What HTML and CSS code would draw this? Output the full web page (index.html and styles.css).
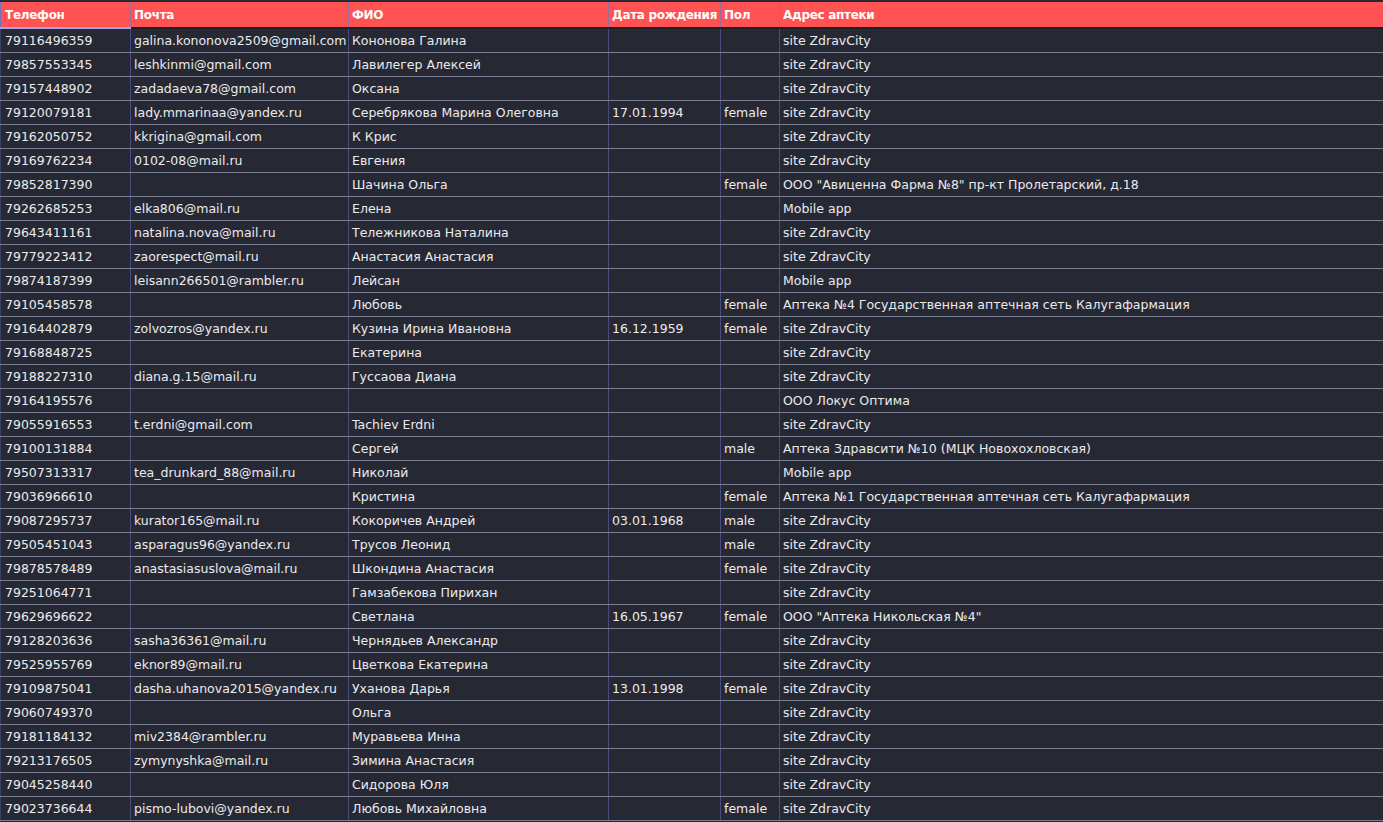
FILE: index.html
```html
<!DOCTYPE html>
<html lang="ru">
<head>
<meta charset="utf-8">
<title>Клиенты</title>
<link rel="stylesheet" href="styles.css">
</head>
<body>
<table class="grid">
<colgroup>
<col class="c-phone"><col class="c-mail"><col class="c-name"><col class="c-date"><col class="c-sex"><col class="c-addr">
</colgroup>
<thead>
<tr><th class="first">Телефон</th><th>Почта</th><th>ФИО</th><th>Дата рождения</th><th>Пол</th><th>Адрес аптеки</th></tr>
</thead>
<tbody>
<tr><td>79116496359</td><td>galina.kononova2509@gmail.com</td><td>Кононова Галина</td><td></td><td></td><td>site ZdravCity</td></tr>
<tr><td>79857553345</td><td>leshkinmi@gmail.com</td><td>Лавилегер Алексей</td><td></td><td></td><td>site ZdravCity</td></tr>
<tr><td>79157448902</td><td>zadadaeva78@gmail.com</td><td>Оксана</td><td></td><td></td><td>site ZdravCity</td></tr>
<tr><td>79120079181</td><td>lady.mmarinaa@yandex.ru</td><td>Серебрякова Марина Олеговна</td><td>17.01.1994</td><td>female</td><td>site ZdravCity</td></tr>
<tr><td>79162050752</td><td>kkrigina@gmail.com</td><td>К Крис</td><td></td><td></td><td>site ZdravCity</td></tr>
<tr><td>79169762234</td><td>0102-08@mail.ru</td><td>Евгения</td><td></td><td></td><td>site ZdravCity</td></tr>
<tr><td>79852817390</td><td></td><td>Шачина Ольга</td><td></td><td>female</td><td>ООО "Авиценна Фарма №8" пр-кт Пролетарский, д.18</td></tr>
<tr><td>79262685253</td><td>elka806@mail.ru</td><td>Елена</td><td></td><td></td><td>Mobile app</td></tr>
<tr><td>79643411161</td><td>natalina.nova@mail.ru</td><td>Тележникова Наталина</td><td></td><td></td><td>site ZdravCity</td></tr>
<tr><td>79779223412</td><td>zaorespect@mail.ru</td><td>Анастасия Анастасия</td><td></td><td></td><td>site ZdravCity</td></tr>
<tr><td>79874187399</td><td>leisann266501@rambler.ru</td><td>Лейсан</td><td></td><td></td><td>Mobile app</td></tr>
<tr><td>79105458578</td><td></td><td>Любовь</td><td></td><td>female</td><td>Аптека №4 Государственная аптечная сеть Калугафармация</td></tr>
<tr><td>79164402879</td><td>zolvozros@yandex.ru</td><td>Кузина Ирина Ивановна</td><td>16.12.1959</td><td>female</td><td>site ZdravCity</td></tr>
<tr><td>79168848725</td><td></td><td>Екатерина</td><td></td><td></td><td>site ZdravCity</td></tr>
<tr><td>79188227310</td><td>diana.g.15@mail.ru</td><td>Гуссаова Диана</td><td></td><td></td><td>site ZdravCity</td></tr>
<tr><td>79164195576</td><td></td><td></td><td></td><td></td><td>ООО Локус Оптима</td></tr>
<tr><td>79055916553</td><td>t.erdni@gmail.com</td><td>Tachiev Erdni</td><td></td><td></td><td>site ZdravCity</td></tr>
<tr><td>79100131884</td><td></td><td>Сергей</td><td></td><td>male</td><td>Аптека Здравсити №10 (МЦК Новохохловская)</td></tr>
<tr><td>79507313317</td><td>tea_drunkard_88@mail.ru</td><td>Николай</td><td></td><td></td><td>Mobile app</td></tr>
<tr><td>79036966610</td><td></td><td>Кристина</td><td></td><td>female</td><td>Аптека №1 Государственная аптечная сеть Калугафармация</td></tr>
<tr><td>79087295737</td><td>kurator165@mail.ru</td><td>Кокоричев Андрей</td><td>03.01.1968</td><td>male</td><td>site ZdravCity</td></tr>
<tr><td>79505451043</td><td>asparagus96@yandex.ru</td><td>Трусов Леонид</td><td></td><td>male</td><td>site ZdravCity</td></tr>
<tr><td>79878578489</td><td>anastasiasuslova@mail.ru</td><td>Шкондина Анастасия</td><td></td><td>female</td><td>site ZdravCity</td></tr>
<tr><td>79251064771</td><td></td><td>Гамзабекова Пирихан</td><td></td><td></td><td>site ZdravCity</td></tr>
<tr><td>79629696622</td><td></td><td>Светлана</td><td>16.05.1967</td><td>female</td><td>ООО "Аптека Никольская №4"</td></tr>
<tr><td>79128203636</td><td>sasha36361@mail.ru</td><td>Чернядьев Александр</td><td></td><td></td><td>site ZdravCity</td></tr>
<tr><td>79525955769</td><td>eknor89@mail.ru</td><td>Цветкова Екатерина</td><td></td><td></td><td>site ZdravCity</td></tr>
<tr><td>79109875041</td><td>dasha.uhanova2015@yandex.ru</td><td>Уханова Дарья</td><td>13.01.1998</td><td>female</td><td>site ZdravCity</td></tr>
<tr><td>79060749370</td><td></td><td>Ольга</td><td></td><td></td><td>site ZdravCity</td></tr>
<tr><td>79181184132</td><td>miv2384@rambler.ru</td><td>Муравьева Инна</td><td></td><td></td><td>site ZdravCity</td></tr>
<tr><td>79213176505</td><td>zymynyshka@mail.ru</td><td>Зимина Анастасия</td><td></td><td></td><td>site ZdravCity</td></tr>
<tr><td>79045258440</td><td></td><td>Сидорова Юля</td><td></td><td></td><td>site ZdravCity</td></tr>
<tr><td>79023736644</td><td>pismo-lubovi@yandex.ru</td><td>Любовь Михайловна</td><td></td><td>female</td><td>site ZdravCity</td></tr>
</tbody>
</table>
</body>
</html>
```

FILE: styles.css
```css
html, body {
  margin: 0;
  padding: 0;
  background: #262833;
  overflow: hidden;
}
body {
  padding-top: 2px;
  font-family: "DejaVu Sans", Verdana, sans-serif;
  font-size: 12.5px;
  color: #ebebef;
}
.grid {
  width: 1384px;
  border-collapse: collapse;
  table-layout: fixed;
}
.c-phone { width: 130px; }
.c-mail { width: 218px; }
.c-name { width: 260px; }
.c-date { width: 112px; }
.c-sex { width: 59px; }
.c-addr { width: 605px; }
.grid th {
  background: #ff5252;
  color: #fff;
  font-size: 12px;
  letter-spacing: -0.3px;
  font-weight: bold;
  text-align: left;
  height: 25px;
  padding: 0 3px;
  border-left: 1px solid #9a6d9e;
  border-bottom: 2px solid #1d1e27;
  white-space: nowrap;
  overflow: hidden;
}
.grid th.first {
  padding-left: 4px;
  border-bottom-color: #a9a6e6;
  border-left-color: #6f74c8;
}
.grid td {
  height: 23px;
  padding: 0 3px;
  border-left: 1px solid #4a4a7e;
  border-bottom: 1px solid #7b7d92;
  white-space: nowrap;
  overflow: hidden;
}
.grid td:first-child {
  padding-left: 4px;
  border-left-color: #3c3f66;
}
```
